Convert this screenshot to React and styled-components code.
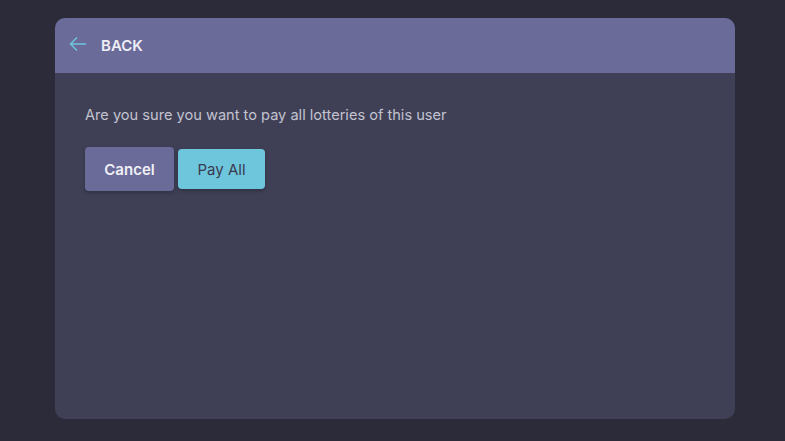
import React from 'react';
import styled, { createGlobalStyle } from 'styled-components';

const GlobalStyle = createGlobalStyle`
  body {
    margin: 0;
    background: #2c2b39;
    font-family: Inter, "Noto Sans", sans-serif;
  }
`;

const Page = styled.div`
  width: 785px;
  height: 441px;
  padding: 18px 50px 22px 55px;
  box-sizing: border-box;
`;

const Card = styled.div`
  height: 401px;
  width: 680px;
  background: #3f4056;
  border-radius: 10px;
  overflow: hidden;
  display: flex;
  flex-direction: column;
`;

const Header = styled.div`
  height: 55px;
  background: #6b6b9a;
  display: flex;
  align-items: center;
  padding-left: 13px;
  gap: 13px;
`;

const BackLabel = styled.span`
  color: #eeeef5;
  font-size: 15px;
  font-weight: 600;
`;

const Body = styled.div`
  padding: 33px 30px;
  display: flex;
  flex-direction: column;
`;

const Message = styled.p`
  margin: 0 0 23px 0;
  color: #c3c3d0;
  font-size: 14.6px;
`;

const Actions = styled.div`
  display: flex;
  align-items: center;
  gap: 4px;
`;

const Button = styled.button`
  border: none;
  border-radius: 4px;
  font-family: inherit;
  font-size: 15px;
  cursor: pointer;
  box-shadow: 0 2px 4px rgba(0, 0, 0, 0.25);
  background: ${({ $primary }) => ($primary ? '#6ec6dd' : '#6b6b9a')};
  color: ${({ $primary }) => ($primary ? '#3a3b4f' : '#f0f0f6')};
  font-weight: ${({ $primary }) => ($primary ? 400 : 600)};
  width: ${({ $primary }) => ($primary ? '87px' : '89px')};
  height: ${({ $primary }) => ($primary ? '40px' : '44px')};
`;

const BackArrow = () => (
  <svg width="20" height="20" viewBox="0 0 20 20" fill="none" stroke="#6ec6dd" strokeWidth="1.4" style={{ marginTop: -4 }}>
    <path d="M18 10H2.5M9 3.5L2.5 10L9 16.5" />
  </svg>
);

const App = () => (
  <>
    <GlobalStyle />
    <Page>
      <Card>
        <Header>
          <BackArrow />
          <BackLabel>BACK</BackLabel>
        </Header>
        <Body>
          <Message>Are you sure you want to pay all lotteries of this user</Message>
          <Actions>
            <Button>Cancel</Button>
            <Button $primary>Pay All</Button>
          </Actions>
        </Body>
      </Card>
    </Page>
  </>
);

export default App;
